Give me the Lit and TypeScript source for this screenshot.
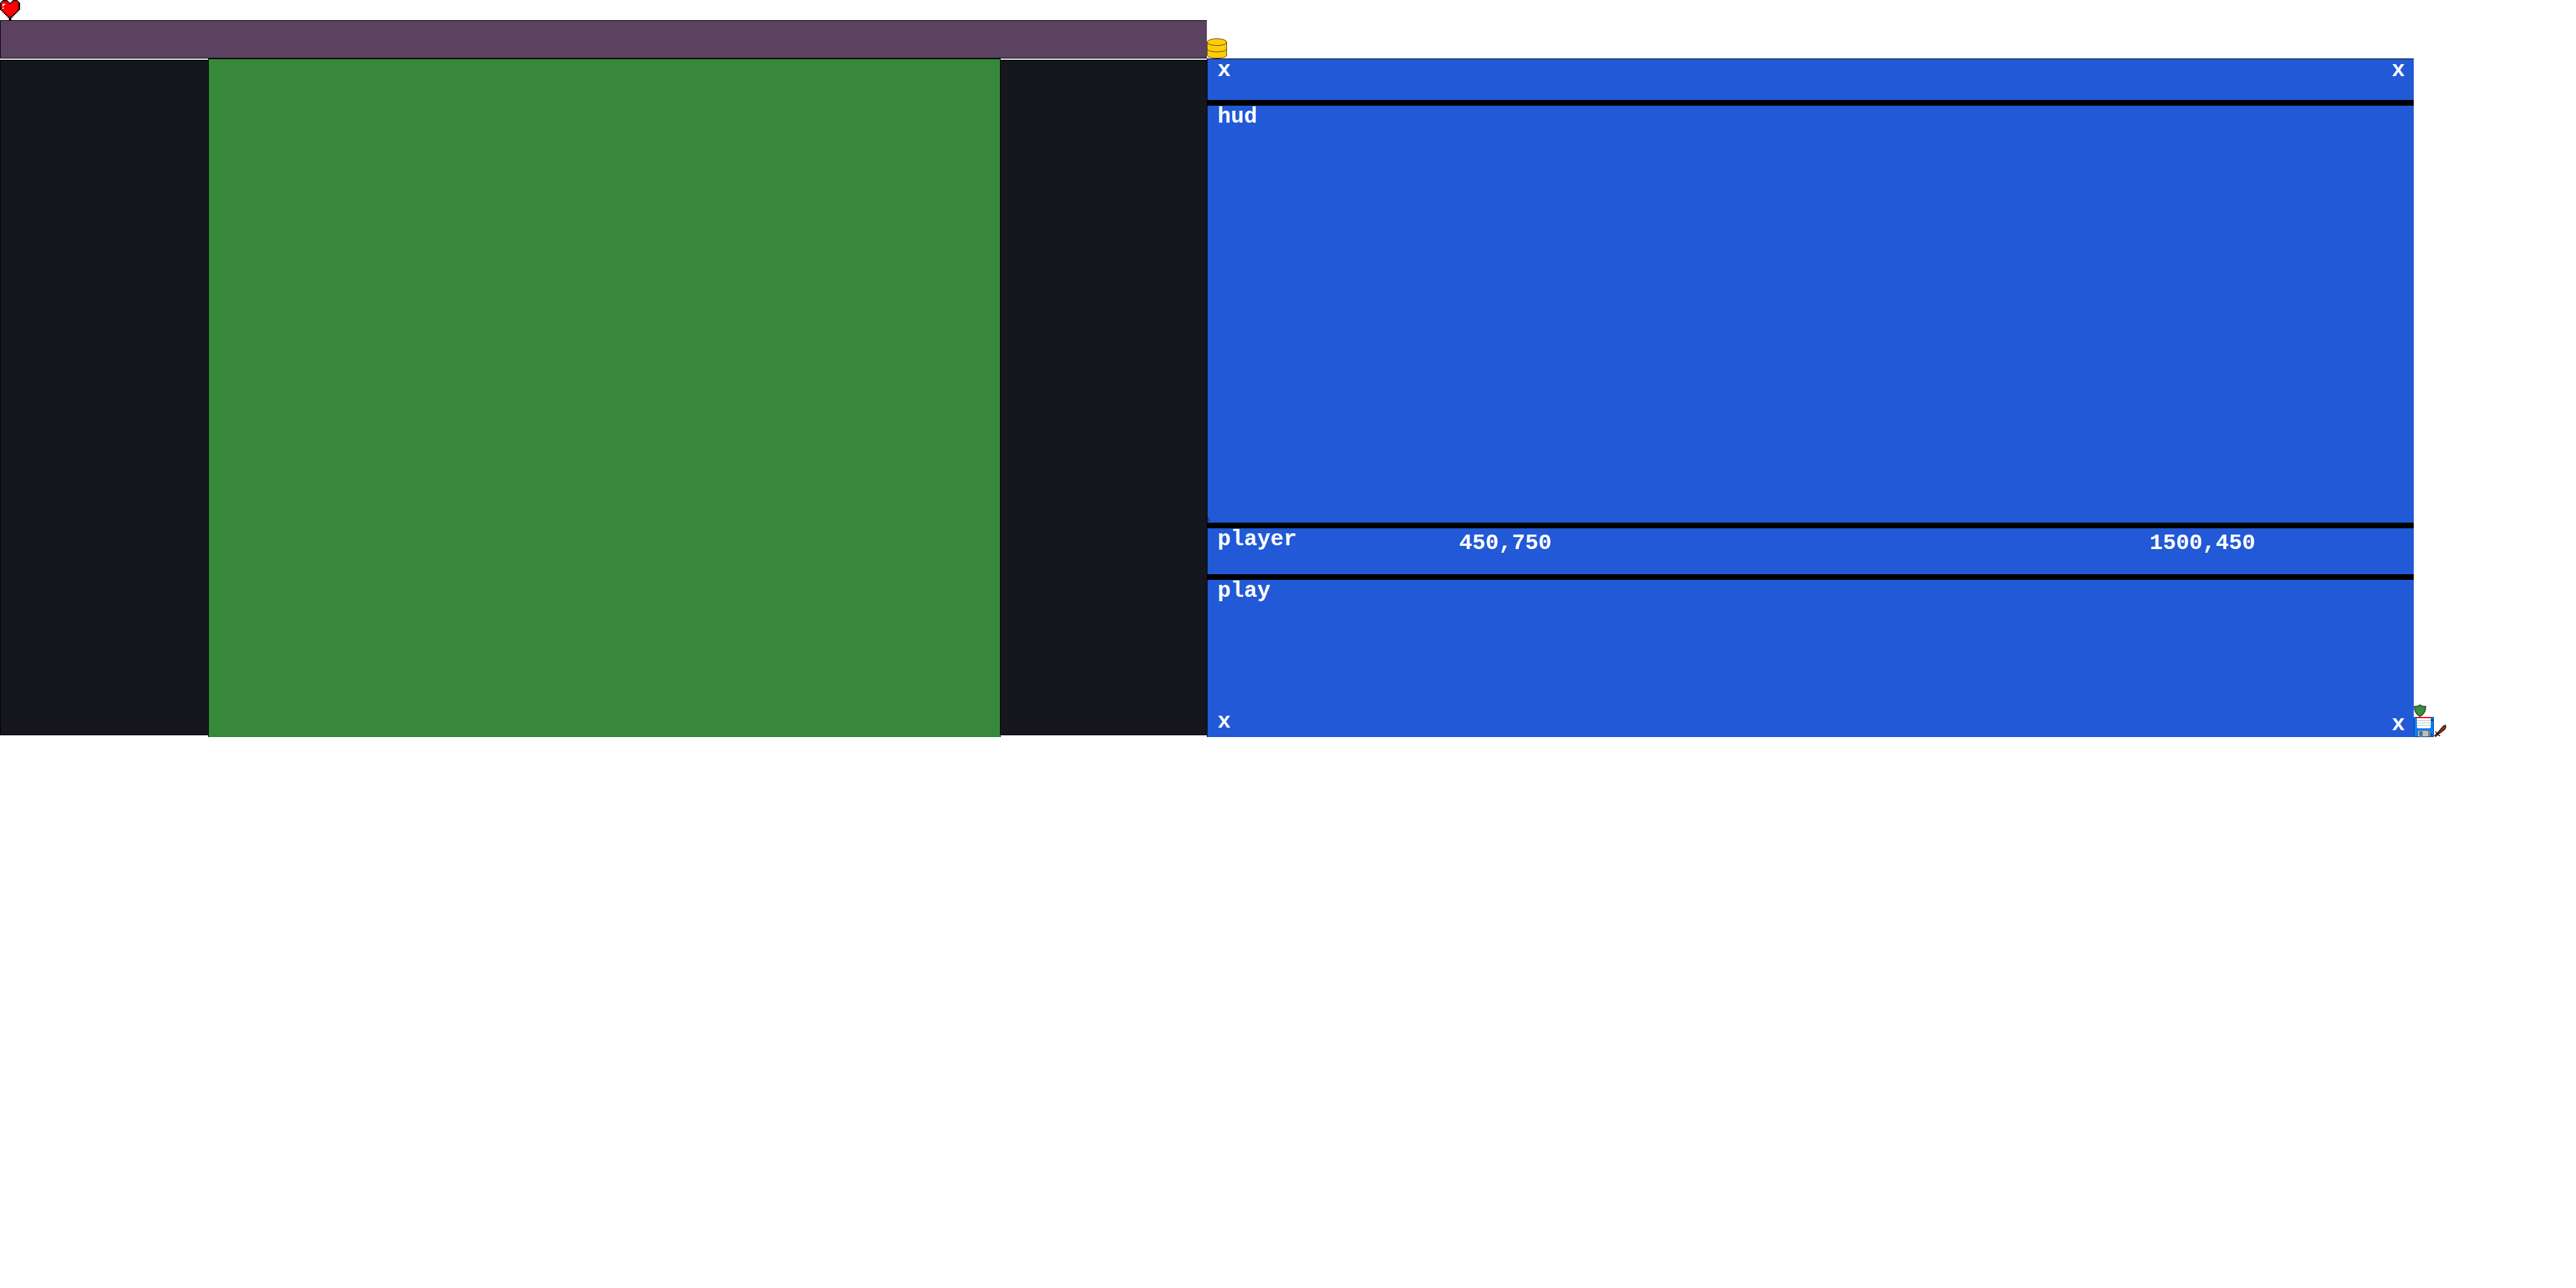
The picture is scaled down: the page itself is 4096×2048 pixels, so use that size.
import { LitElement, html, css, svg } from "lit";
import { customElement } from "lit/decorators.js";

const HEART = [
  "..XXXX....XXXX..",
  ".XrrrrX..XrrrrX.",
  "XrrrrrrXXrrrrrdX",
  "XrWWrrrrrrrrrrdX",
  "XrWrrrrrrrrrrrdX",
  "XrrrrrrrrrrrrrdX",
  "XrWrrrrrrrrrrrdX",
  "XrrrrrrrrrrrrrdX",
  ".XrrrrrrrrrrrdX.",
  "..XrrrrrrrrrdX..",
  "...XrrrrrrrdX...",
  "....XrrrrrdX....",
  ".....XrrrdX.....",
  "......XddX......",
  ".......XX.......",
  ".......XX.......",
];
const INK: Record<string, string> = { X: "#000", r: "#f00", d: "#a00000", W: "#fff" };

@customElement("pixel-heart")
export class PixelHeart extends LitElement {
  static styles = css`
    :host, svg { display: block; }
  `;
  render() {
    return html`<svg width="32" height="32" viewBox="0 0 16 16" shape-rendering="crispEdges" aria-hidden="true">
      ${HEART.flatMap((row, y) =>
        [...row].map((c, x) =>
          INK[c] ? svg`<rect x=${x} y=${y} width="1" height="1" fill=${INK[c]}></rect>` : null
        )
      )}
    </svg>`;
  }
}

@customElement("game-board")
export class GameBoard extends LitElement {
  static styles = css`
    :host { display: flex; flex-direction: column; }
    .bar {
      height: 61px;
      box-sizing: border-box;
      background: #5b4260;
      border: 1px solid #000;
      border-right: 0;
    }
    .field {
      flex: 1;
      display: grid;
      grid-template-columns: 331fr 1260fr 328fr;
    }
    .wall {
      margin: 2px 0 3px;
      background: #16161e;
      border: 1px solid #000;
      border-right: 0;
      box-shadow: 0 1px 0 #d8d4d4;
    }
    .wall.right { border-left: 0; }
    .grass {
      background: #37883a;
      border: 1px solid #000;
      border-bottom: 0;
    }
  `;
  render() {
    return html`
      <div class="bar"></div>
      <div class="field">
        <div class="wall"></div>
        <div class="grass"></div>
        <div class="wall right"></div>
      </div>
    `;
  }
}

@customElement("layout-panel")
export class LayoutPanel extends LitElement {
  static styles = css`
    :host { display: block; }
    svg { display: block; }
    .panel {
      color: #fff;
      background: #2159d7;
      border-top: 1px solid #000;
      border-left: 1px solid #000;
      font: bold 35px/32px "Liberation Mono", monospace;
    }
    .row {
      box-sizing: border-box;
      border-bottom: 9px solid #000;
    }
    .ends {
      display: flex;
      justify-content: space-between;
      align-items: flex-end;
      padding: 0 14px 4px 16px;
    }
    .top {
      min-height: 74px;
      align-items: flex-start;
      padding-top: 2px;
    }
    .hud {
      position: relative;
      min-height: 672px;
    }
    .speck {
      position: absolute;
      left: 0;
      bottom: 1px;
    }
    .player {
      display: grid;
      grid-template-columns: 400fr 1098fr 420fr;
      min-height: 82px;
    }
    .label {
      display: block;
      padding: 2px 16px;
    }
    .value { padding-top: 8px; }
    .play {
      display: flex;
      flex-direction: column;
      justify-content: space-between;
      min-height: 250px;
    }
    .raised { padding-bottom: 4px; }
  `;
  render() {
    return html`
      <svg width="32" height="32" viewBox="0 0 32 32" fill="#ffcc05" stroke="#4a431c" aria-hidden="true">
        <path d="M.5 6v21c0 6 31 6 31 0V6"></path>
        <ellipse cx="16" cy="6" rx="15.500" ry="5.500"></ellipse>
        <path d="M.5 17c2 6 29 6 31 0" fill="none"></path>
      </svg>
      <div class="panel">
        <div class="row ends top"><span>x</span><span>x</span></div>
        <div class="row hud">
          <span class="label">hud</span>
          <svg class="speck" width="4" height="8" viewBox="0 0 4 8" aria-hidden="true">
            <path d="M0 0l2 1v2l2 2v2H0z" fill="#173f8f"></path>
          </svg>
        </div>
        <div class="row player">
          <span class="label">player</span>
          <span class="value">450,750</span>
          <span class="value">1500,450</span>
        </div>
        <div class="play">
          <span class="label">play</span>
          <div class="ends"><span class="raised">x</span><span>x</span></div>
        </div>
      </div>
    `;
  }
}

@customElement("item-tray")
export class ItemTray extends LitElement {
  static styles = css`
    :host {
      display: flex;
      flex-direction: column;
      justify-content: flex-end;
      align-items: flex-start;
    }
    svg { display: block; }
    .line { display: flex; align-items: flex-end; }
  `;
  render() {
    return html`
      <svg width="20" height="20" viewBox="0 0 20 20" aria-hidden="true">
        <path d="M10 .7C7.500 2.700 4 3.500.8 3.200C.7 11 4 16 10 19.300C16 16 19.300 11 19.200 3.200C16 3.500 12.500 2.700 10 .7z" fill="#338238" stroke="#35443a" stroke-width="1.400"></path>
        <path d="M10 3C8 4.400 5.500 5 3 5C3.300 10.500 5.500 14.500 10 17C14.500 14.500 16.700 10.500 17 5C14.500 5 12 4.400 10 3z" fill="#389040"></path>
      </svg>
      <div class="line">
        <svg width="32" height="32" viewBox="0 0 32 32" shape-rendering="crispEdges" aria-hidden="true">
          <rect width="32" height="32" fill="#06386b"></rect>
          <rect x="1" y="1" width="30" height="30" fill="#0880ff"></rect>
          <path d="M0 0h1v1H0zM31 0h1v1h-1zM0 31h1v1H0zM31 31h1v1h-1z" fill="#0d2"></path>
          <rect x="5" y="0" width="22" height="2" fill="#f00"></rect>
          <path d="M5 2h22v15h-1v1H6v-1H5z" fill="#fff"></path>
          <path d="M5 5h22v1H5zM5 9h22v1H5zM5 13h22v1H5z" fill="#bbb"></path>
          <rect x="28" y="4" width="2" height="2" fill="#000"></rect>
          <rect x="6" y="21" width="20" height="10" fill="#5d6870"></rect>
          <rect x="7" y="22" width="16" height="9" fill="#bdbdbd"></rect>
          <rect x="24" y="22" width="1" height="9" fill="#9aa"></rect>
          <rect x="9" y="23" width="5" height="7" fill="#555"></rect>
          <rect x="10" y="24" width="3" height="5" fill="#0880ff"></rect>
          <path d="M28 26h1v4h-1zM27 28h3v1h-3z" fill="#06386b"></path>
        </svg>
        <svg width="20" height="20" viewBox="0 0 20 20" aria-hidden="true">
          <path d="M7 12L15 2.500L18.500 1L19 4.500L17 8L8.500 14.500z" fill="#a52a12" stroke="#24100c" stroke-width="1.300"></path>
          <path d="M7.500 13L1.500 19" stroke="#24100c" stroke-width="3.500"></path>
          <path d="M6.500 14L1.500 19" stroke="#902412" stroke-width="1.300"></path>
          <path d="M2.500 11L4 13L7.500 17L10 18" fill="none" stroke="#24100c" stroke-width="1.500"></path>
        </svg>
      </div>
    `;
  }
}

@customElement("app-root")
export class AppRoot extends LitElement {
  static styles = css`
    :host {
      display: block;
      background: #fff;
    }
    .scene {
      display: grid;
      grid-template-columns: 1919fr 1919fr 258fr;
    }
    .panel { padding-top: 29px; }
  `;
  render() {
    return html`
      <pixel-heart></pixel-heart>
      <main class="scene">
        <game-board></game-board>
        <layout-panel class="panel"></layout-panel>
        <item-tray></item-tray>
      </main>
    `;
  }
}
